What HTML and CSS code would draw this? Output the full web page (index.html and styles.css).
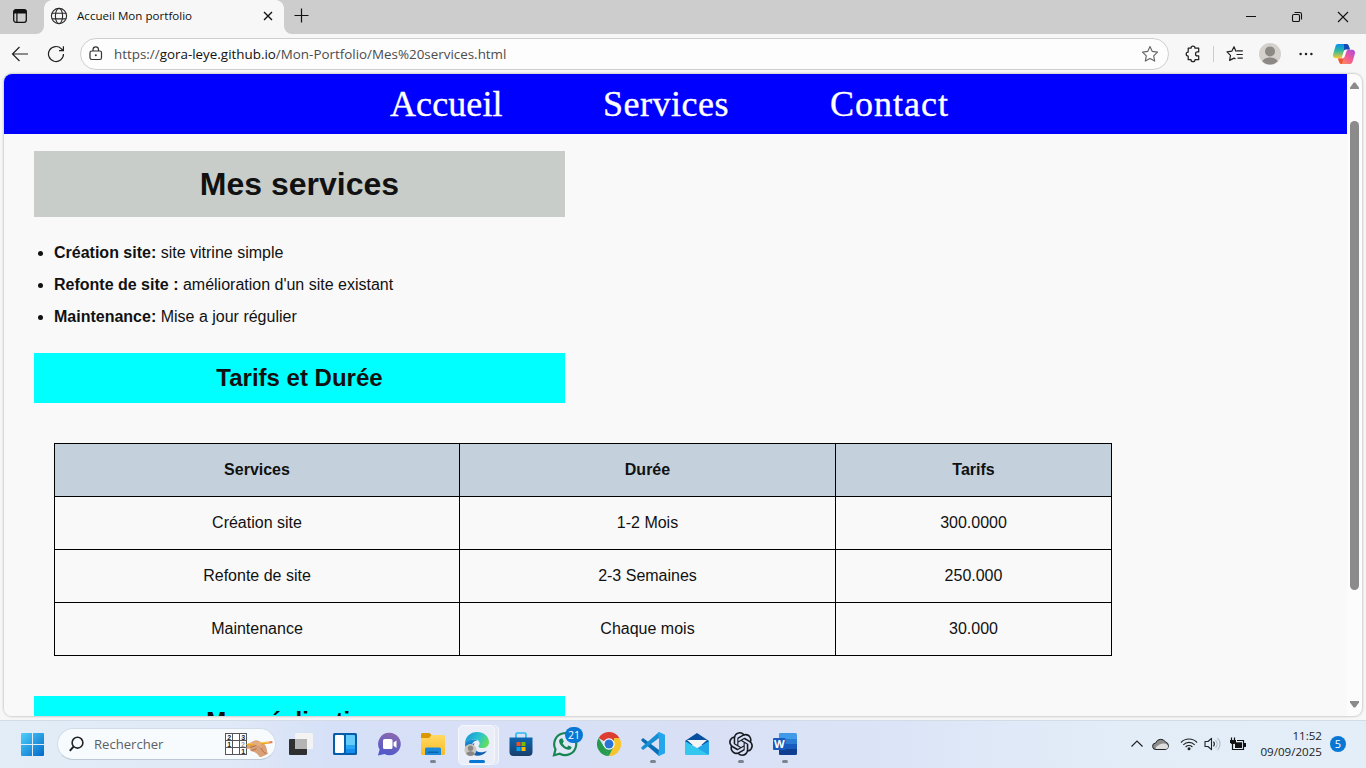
FILE: index.html
```html
<!DOCTYPE html>
<html lang="fr">
<head>
<meta charset="utf-8">
<title>Accueil Mon portfolio</title>
<link rel="stylesheet" href="styles.css">
</head>
<body>
<header class="tabstrip">
  <div class="strip-left">
    <svg width="16" height="16" viewBox="0 0 16 16"><rect x="1.7" y="1.7" width="12.6" height="12.6" rx="2.2" fill="none" stroke="#111" stroke-width="1.3"/><path d="M1.5 5.4V3.5a2 2 0 0 1 2-2h9a2 2 0 0 1 2 2v1.9z" fill="#111"/><path d="M4.9 5v9" stroke="#111" stroke-width="1.2"/></svg>
  </div>
  <div class="tab">
    <svg class="globe" width="18" height="18" viewBox="0 0 18 18" fill="none" stroke="#2b2b2b" stroke-width="1.15"><circle cx="9" cy="9" r="7.6"/><ellipse cx="9" cy="9" rx="3.6" ry="7.6"/><path d="M2 6.2h14M2 11.8h14"/></svg>
    <span class="tab-title">Accueil Mon portfolio</span>
    <svg class="tab-close" width="10" height="10" viewBox="0 0 10 10"><path d="M1 1l8 8M9 1l-8 8" stroke="#111" stroke-width="1.4"/></svg>
  </div>
  <div class="strip-right">
    <svg class="plus" width="15" height="15" viewBox="0 0 15 15"><path d="M7.5.5v14M.5 7.5h14" stroke="#111" stroke-width="1.2"/></svg>
    <div class="window-buttons">
      <svg width="12" height="12" viewBox="0 0 12 12"><path d="M1 5.500h10" stroke="#111"/></svg>
      <svg width="12" height="12" viewBox="0 0 12 12" fill="none" stroke="#111" stroke-width="1.1"><rect x="1.5" y="3.5" width="7" height="7" rx="1.3"/><path d="M3.5 1.5H8.7a1.8 1.8 0 0 1 1.8 1.8V8.5"/></svg>
      <svg width="12" height="12" viewBox="0 0 12 12"><path d="M1 1l10 10M11 1L1 11" stroke="#111" stroke-width="1.1"/></svg>
    </div>
  </div>
</header>
<div class="toolbar">
  <svg class="back" width="18" height="18" viewBox="0 0 18 18" fill="none" stroke="#222" stroke-width="1.2"><path d="M17 9H1.5M8.5 2L1.5 9l7 7"/></svg>
  <svg class="reload" width="18" height="18" viewBox="0 0 18 18" fill="none" stroke="#222" stroke-width="1.2"><path d="M16.5 9a7.5 7.5 0 1 1-2.1-5.2L16 5.5M16.4 1.2v4.5H12"/></svg>
  <div class="address">
    <svg width="14" height="16" viewBox="0 0 14 16" fill="none" stroke="#333" stroke-width="1.2"><rect x="1" y="5" width="11.5" height="8.5" rx="1.8"/><path d="M4 5V3.700a2.75 2.75 0 0 1 5.5 0V5"/><circle cx="6.8" cy="9.300" r="1" fill="#333" stroke="none"/></svg>
    <span class="url">https://<b>gora-leye.github.io</b>/Mon-Portfolio/Mes%20services.html</span>
    <svg class="star" width="18" height="18" viewBox="0 0 18 18" fill="none" stroke="#666" stroke-width="1.15" stroke-linejoin="round"><path d="M9 1.5l2.3 4.9 5.2.7-3.8 3.7 1 5.3L9 13.6l-4.7 2.5 1-5.3L1.5 7.1l5.2-.7z"/></svg>
  </div>
  <div class="tools">
    <svg class="puzzle" width="18" height="18" viewBox="0 0 18 18" fill="none" stroke="#222" stroke-width="1.25" stroke-linejoin="round"><path d="M4.2 3.2H7a2 2 0 0 1 4 0h3.7v3.7h-1.2a2 2 0 0 0 0 4h1.2v3.8H11a2 2 0 0 1-4 0H4.2V11a2 2 0 1 1 0-4z"/></svg>
    <span class="divider"></span>
    <svg class="favs" width="18" height="18" viewBox="0 0 18 18" fill="none" stroke="#222" stroke-width="1.2" stroke-linejoin="round"><path d="M10 6.5l-2-4.8-2.2 4.5-4.8.7 3.5 3.5-.9 5L8 13.1l1.5.8M10.5 5.8h6.3M10.5 9.5h6.3M11.5 13.2h5.3"/></svg>
    <svg class="avatar" width="22" height="22" viewBox="0 0 22 22"><circle cx="11" cy="11" r="11" fill="#d4d1cd"/><circle cx="11" cy="8.4" r="5" fill="#8c8883"/><path d="M3.4 18.4C5 13.3 17 13.3 18.6 18.4A11 11 0 0 1 3.4 18.4z" fill="#8c8883"/></svg>
    <svg class="more" width="16" height="4" viewBox="0 0 16 4" fill="#222"><circle cx="2.6" cy="2" r="1.25"/><circle cx="8" cy="2" r="1.25"/><circle cx="13.4" cy="2" r="1.25"/></svg>
    <svg class="copilot" width="24" height="22" viewBox="0 0 24 22"><defs><linearGradient id="ca" x1="0" y1="0" x2="0" y2="1"><stop offset="0" stop-color="#0a8df0"/><stop offset=".45" stop-color="#28b7a4"/><stop offset="1" stop-color="#f8cb2e"/></linearGradient><linearGradient id="cb" x1="1" y1="0" x2="0" y2="1"><stop offset="0" stop-color="#a748e8"/><stop offset=".5" stop-color="#f45c91"/><stop offset="1" stop-color="#ff9d4a"/></linearGradient></defs><path d="M6 1h8.2c2 0 2.4 1.3 3 3.3l.7 2.2H15c-2 0-2.7 1-3.3 3L10 15.2H4C1.5 15.2.5 13.3 1.2 11L3.400 3.400C3.900 1.800 4.600 1 6 1z" fill="url(#ca)"/><path d="M12 1h2.200c2 0 2.400 1.300 3 3.300l.700 2.200H15c-1.500 0-2.200.4-2.800 1.500z" fill="#1549b7"/><path d="M18 21H9.800c-2 0-2.500-1.300-3.100-3.300l-.6-2.200H9c2 0 2.700-1 3.300-3L14 6.800h6c2.500 0 3.500 1.900 2.800 4.200l-2.200 7.600c-.5 1.600-1.200 2.400-2.600 2.400z" fill="url(#cb)"/><path d="M6.100 15.500H9c1.300 0 2.100-.5 2.700-1.500L10 21c-2 0-2.700-1.300-3.300-3.300z" fill="#ee5737"/><path d="M13 6.700h3c-1 .3-1.500 1.300-1.900 2.600l-1.300 4c-.4 1.300-1.300 2.100-2.700 2.100H9.600l1.900-6.200c.3-1.200.7-2 1.500-2.500z" fill="#fbf9fc"/></svg>
  </div>
</div>
<div class="viewport-frame">
  <div class="page">
    <nav class="nav"><a class="n1">Accueil</a><a class="n2">Services</a><a class="n3">Contact</a></nav>
    <main class="content">
      <h1>Mes services</h1>
      <ul>
        <li><strong>Création site:</strong> site vitrine simple</li>
        <li><strong>Refonte de site :</strong> amélioration d'un site existant</li>
        <li><strong>Maintenance:</strong> Mise a jour régulier</li>
      </ul>
      <h2>Tarifs et Durée</h2>
      <table>
        <colgroup><col class="c1"><col class="c2"><col class="c3"></colgroup>
        <tr><th>Services</th><th>Durée</th><th>Tarifs</th></tr>
        <tr><td>Création site</td><td>1-2 Mois</td><td>300.0000</td></tr>
        <tr><td>Refonte de site</td><td>2-3 Semaines</td><td>250.000</td></tr>
        <tr><td>Maintenance</td><td>Chaque mois</td><td>30.000</td></tr>
      </table>
      <h2>Mes réalisations</h2>
    </main>
  </div>
  <div class="scrollbar">
    <svg width="9" height="8" viewBox="0 0 9 8"><path d="M3.700.5h1.600L9 5.500V7H0V5.500z" fill="#8b8b8b"/></svg>
    <div class="thumb"></div>
    <svg class="down" width="9" height="8" viewBox="0 0 9 8"><path d="M3.700 7.500h1.600L9 2.500V1H0v1.500z" fill="#8b8b8b"/></svg>
  </div>
</div>
<footer class="taskbar">
  <svg class="start" width="23" height="23" viewBox="0 0 23 23"><defs><linearGradient id="wa" x1="0" y1="0" x2="1" y2="1"><stop offset="0" stop-color="#4fd0fb"/><stop offset="1" stop-color="#0069c9"/></linearGradient></defs><path d="M0 1a1 1 0 0 1 1-1h10v11H0zM12 0h10a1 1 0 0 1 1 1v10H12zM0 12h11v11H1a1 1 0 0 1-1-1zM12 12h11v10a1 1 0 0 1-1 1H12z" fill="url(#wa)"/></svg>
  <div class="search">
    <svg width="16" height="16" viewBox="0 0 16 16" fill="none" stroke="#222" stroke-width="1.6"><circle cx="8.500" cy="6.700" r="5.400"/><path d="M4.500 10.600L.8 14.800" stroke-width="2"/></svg>
    <span>Rechercher</span>
    <svg class="sudoku" width="50" height="26" viewBox="0 0 50 26"><rect x="1.500" y="2.500" width="21" height="21" fill="#fff" stroke="#555"/><path d="M8.500 2.500v21M15.500 2.500v21M1.500 9.500h21M1.500 16.500h21" stroke="#555"/><g class="digits"><text x="3.200" y="8.500">2</text><text x="17.300" y="8.500">3</text><text x="3.200" y="15.500">1</text><text x="17.300" y="22.500">1</text><text class="faint" x="17" y="15.500">2</text></g><path d="M23 14.500c2-2 6-4.700 9-5.200 3 .2 6 2.200 8.500 4 2.700 2.400 2 7 3.500 9.700l-8 3.500c-2.200-4-5-5.500-7.700-6-2.500-.5-3-2-1.500-2.700h-3c-2 0-2-1.500-.8-2z" fill="#daa078"/><path d="M26 16.500l6-2 4 .5M27.500 19.500l5-1.700M37 17c1 2.500 2.500 4.500 5 5.500" stroke="#ae7048" fill="none"/><path d="M21.500 13.800l4-1.800 20.500-1.500.3 2-20.500 2.200z" fill="#eda825"/><path d="M25.500 12.600l20.400-1.700" stroke="#ffd979" stroke-width=".7"/><path d="M45.500 10.300l2.700-.2.300 2-2.800.3z" fill="#ed786b"/><path d="M27 12.500c3-2.500 6-2.500 9-.2l2 3.200c-2 .5-5-.5-6.500-1.600z" fill="#e3ac84"/></svg>
  </div>
  <div class="apps">
    <div class="app"><svg width="24" height="24" viewBox="0 0 24 24"><rect x="0" y="7" width="18" height="16" rx="1" fill="#303030"/><rect x="6" y="1" width="18" height="16" rx="1" fill="#f3f3f3"/><rect x="6" y="7" width="12" height="10" fill="#b4b4b4"/></svg></div>
    <div class="app"><svg width="24" height="24" viewBox="0 0 24 24"><rect x="0" y="1" width="24" height="22" rx="1.5" fill="#075da9"/><rect x="2" y="3" width="9" height="18" rx="1" fill="#fff"/><path d="M13 3h8a1 1 0 0 1 1 1v9h-9z" fill="#66cdfb"/><path d="M13 13h9v7a1 1 0 0 1-1 1h-8z" fill="#168ded"/><path d="M13 13h9v4h-9z" fill="#27a6f5"/></svg></div>
    <div class="app"><svg width="24" height="24" viewBox="0 0 24 24"><defs><linearGradient id="cha" x1=".7" y1="0" x2=".4" y2="1"><stop offset="0" stop-color="#8c68ae"/><stop offset="1" stop-color="#5059cb"/></linearGradient></defs><path d="M12.5.8a11.2 11.2 0 1 1-5 21.2L1 23.500l1.600-6A11.200 11.200 0 0 1 12.500.8z" fill="url(#cha)"/><rect x="6" y="7" width="9.500" height="10" rx="1.600" fill="#fff"/><path d="M16.500 10.500l3-2v7.500l-3-2.200z" fill="#fff"/></svg></div>
    <div class="app running"><svg width="24" height="24" viewBox="0 0 24 24"><path d="M0 2.500A1.500 1.500 0 0 1 1.500 1h7L11 3.500h11.500A1.500 1.500 0 0 1 24 5V12H0z" fill="#dc9600"/><defs><linearGradient id="fo" x1="0" y1="0" x2="0" y2="1"><stop stop-color="#ffd965"/><stop offset="1" stop-color="#fbbc23"/></linearGradient></defs><path d="M0 6h8l2.500-3h12A1.500 1.500 0 0 1 24 4.500v17a1.500 1.500 0 0 1-1.500 1.500h-21A1.500 1.500 0 0 1 0 21.500z" fill="url(#fo)"/><path d="M4 23v-6a1.500 1.500 0 0 1 1.500-1.500h13A1.500 1.500 0 0 1 20 17v6z" fill="#188ad9"/><path d="M7.500 19.500h9a1 1 0 0 1 1 1v.5h-11v-.5a1 1 0 0 1 1-1z" fill="#0865ae"/></svg></div>
    <div class="app active"><svg width="26" height="26" viewBox="0 0 26 26"><defs><linearGradient id="ea" x1="0" y1=".2" x2="1" y2=".6"><stop stop-color="#1696d6"/><stop offset=".55" stop-color="#2bc3cf"/><stop offset="1" stop-color="#65e059"/></linearGradient><linearGradient id="eb" x1="0" y1="0" x2="0" y2="1"><stop stop-color="#1593d5"/><stop offset="1" stop-color="#105aa9"/></linearGradient></defs><path d="M1 13C1 5.800 6.500 1 13 1c7 0 12 4.700 12 10 0 4-3 6-6.500 6-3.300 0-4.700-1.200-3.700-2.600 2.300-3-.3-6-4.300-6C5.500 8.400 2 10.500 1 13z" fill="url(#ea)"/><path d="M1 13c1-3 4.500-4.700 8.500-4.600 1.500 0 3 .4 4 1.100-4 .3-6 3-5.500 6.500.5 5 5 9 10 7.500A12 12 0 0 1 1 13z" fill="url(#eb)"/><path d="M10.500 12c-2.400 4.500 1 9 6 9.300 2.400.1 4.600-.5 6.500-1.500-2.400 4-8 6-12.500 4-5-3-4.500-10 0-11.800z" fill="#0e60ae"/><circle cx="6.500" cy="19" r="6" fill="#c9c6c2"/><circle cx="6.500" cy="17.200" r="2.700" fill="#8b8783"/><path d="M2.300 23c1-3.600 7.500-3.600 8.500 0-2.300 2.600-6.200 2.600-8.500 0z" fill="#8b8783"/></svg></div>
    <div class="app"><svg width="24" height="24" viewBox="0 0 24 24"><defs><linearGradient id="st" x1="0" y1="0" x2="0" y2="1"><stop stop-color="#0d67b3"/><stop offset="1" stop-color="#183e6c"/></linearGradient></defs><path d="M7 6V2.500A1.500 1.500 0 0 1 8.500 1h7A1.500 1.500 0 0 1 17 2.500V6" fill="none" stroke="#28b9ee" stroke-width="1.700"/><path d="M.5 5.500h23V20a4 4 0 0 1-4 4h-15a4 4 0 0 1-4-4z" fill="url(#st)"/><path d="M7.500 10h4v4h-4z" fill="#f25022"/><path d="M12.500 10h4v4h-4z" fill="#7fba00"/><path d="M7.500 15h4v4h-4z" fill="#00a4ef"/><path d="M12.500 15h4v4h-4z" fill="#ffb900"/></svg></div>
    <div class="app"><svg width="26" height="26" viewBox="0 0 26 26"><path d="M2 24.300l1.500-6a11 11 0 1 1 4.300 4.400z" fill="#f3f8f6" fill-opacity=".3" stroke="#178653" stroke-width="2.200"/><path d="M9 7.500l1.300-.2 1.500 3.200-1.200 1.700c1 2 2.400 3.200 4.300 4l1.700-1.600 3 1.500c.2 1-.9 2.700-2.800 2.700-4.300 0-9.700-4.800-9.700-8.700 0-1.200.7-2.200 1.900-2.600z" fill="#178653"/></svg><span class="badge">21</span></div>
    <div class="app"><svg width="24" height="24" viewBox="0 0 24 24"><path d="M12 12L1.600 6A12 12 0 0 1 22.400 6z" fill="#dc3f32"/><path d="M1.600 6L7.200 15 12 24A12 12 0 0 1 1.600 6z" fill="#269b50"/><path d="M12 24l5-9.200V6h5.400A12 12 0 0 1 12 24z" fill="#f6c42d"/><path d="M7.600 14.500l4.400 2.800 4.800-2.500L12 24 6 14z" fill="#269b50"/><path d="M16.800 14.700L12 24c3 0 6.700-1.600 8.800-4.500z" fill="#f6c42d"/><circle cx="12" cy="12" r="5.700" fill="#fff"/><circle cx="12" cy="12" r="4.500" fill="#2874d9"/></svg></div>
    <div class="app running"><svg width="24" height="24" viewBox="0 0 24 24"><path d="M0 8l2-2 16 12v6L1 9.200z" fill="#086eb5"/><path d="M0 16l2 2L18 6V0L1 14.800z" fill="#168ed3"/><path d="M18 0l6 2.700v18.600L18 24l-1-.5 1-5.500V6l-1-5.500z" fill="#25a6ec"/></svg></div>
    <div class="app"><svg width="24" height="24" viewBox="0 0 24 24"><path d="M0 9L12 1l12 8v4H0z" fill="#0750a0"/><path d="M2 8h20l-9 8h-2z" fill="#f2f4f6"/><path d="M24 9v12.500a1.500 1.500 0 0 1-1.500 1.500H1z" fill="#22a5e9"/><path d="M0 9l12 7 12 7H1.500A1.500 1.500 0 0 1 0 21.500z" fill="#33c6ef"/></svg></div>
    <div class="app running"><svg width="24" height="24" viewBox="0 0 24 24" fill="#171a20"><path d="M22.282 9.821a5.985 5.985 0 0 0-.516-4.910 6.046 6.046 0 0 0-6.510-2.900A6.065 6.065 0 0 0 4.981 4.182a5.985 5.985 0 0 0-3.998 2.900 6.046 6.046 0 0 0 .743 7.097 5.980 5.980 0 0 0 .510 4.911 6.051 6.051 0 0 0 6.515 2.900A5.985 5.985 0 0 0 13.260 24a6.056 6.056 0 0 0 5.772-4.206 5.990 5.990 0 0 0 3.998-2.900 6.056 6.056 0 0 0-.748-7.073zM13.260 22.430a4.476 4.476 0 0 1-2.877-1.041l.142-.08 4.778-2.758a.795.795 0 0 0 .393-.682v-6.737l2.020 1.169a.071.071 0 0 1 .038.052v5.583a4.504 4.504 0 0 1-4.494 4.494zM3.600 18.304a4.471 4.471 0 0 1-.535-3.014l.142.085 4.783 2.759a.771.771 0 0 0 .780 0l5.844-3.369v2.332a.080.080 0 0 1-.034.062L9.740 19.950a4.499 4.499 0 0 1-6.140-1.646zM2.340 7.896a4.485 4.485 0 0 1 2.366-1.973V11.600a.766.766 0 0 0 .388.677l5.815 3.354-2.020 1.169a.076.076 0 0 1-.072 0l-4.830-2.787A4.504 4.504 0 0 1 2.340 7.896zm16.597 3.855l-5.833-3.387L15.119 7.200a.076.076 0 0 1 .071 0l4.830 2.791a4.494 4.494 0 0 1-.676 8.105v-5.678a.790.790 0 0 0-.407-.667zm2.010-3.023l-.141-.085-4.774-2.782a.776.776 0 0 0-.785 0L9.409 9.230V6.897a.066.066 0 0 1 .028-.061l4.830-2.787a4.500 4.500 0 0 1 6.680 4.660zM8.307 12.863l-2.020-1.164a.080.080 0 0 1-.038-.057V6.075a4.499 4.499 0 0 1 7.376-3.454l-.142.081-4.778 2.758a.795.795 0 0 0-.393.681zm1.097-2.365l2.602-1.500 2.607 1.500v2.999l-2.597 1.500-2.607-1.500z"/></svg></div>
    <div class="app running"><svg width="24" height="24" viewBox="0 0 24 24"><path d="M7 1h15.500A1.500 1.500 0 0 1 24 2.500V7H6V2a1 1 0 0 1 1-1z" fill="#3f9be9"/><path d="M6 7h18v5H6z" fill="#2b7cd3"/><path d="M6 12h18v5H6z" fill="#185abd"/><path d="M6 17h18v4.500a1.500 1.500 0 0 1-1.500 1.500H7a1 1 0 0 1-1-1z" fill="#103f91"/><rect x="0" y="6" width="12.500" height="12" rx="1" fill="#185abd"/><text x="6.250" y="15.800" text-anchor="middle" class="word-letter">W</text></svg></div>
  </div>
  <div class="tray">
    <svg class="chev" width="14" height="10" viewBox="0 0 14 10"><path d="M1.500 7.500L7 2l5.500 5.500" fill="none" stroke="#222" stroke-width="1.200"/></svg>
    <svg class="cloud" width="18" height="14" viewBox="0 0 18 14"><path d="M4 12.500A3.200 3.200 0 0 1 3.700 6 5.400 5.400 0 0 1 13.500 5 3.900 3.900 0 0 1 13.700 12.500z" fill="#8d8d8d" stroke="#222"/><path d="M4 12C2.500 10 8 7 10 6.800c2.500-.8 6 .5 6.100 2.700 0 1.500-1 2.500-2.400 2.500z" fill="#dedede"/></svg>
    <svg class="wifi" width="18" height="14" viewBox="0 0 18 14" fill="none" stroke="#222" stroke-width="1.100"><path d="M1 5.500a11 11 0 0 1 16 0M3.300 7.800a8 8 0 0 1 11.400 0M5.600 10a5 5 0 0 1 6.800 0"/><circle cx="9" cy="11.800" r="1.500" fill="#222" stroke="none"/></svg>
    <svg class="sound" width="18" height="14" viewBox="0 0 18 14" fill="none" stroke="#222" stroke-width="1.100"><path d="M1 4.500h3L7.500 1.300v11.400L4 9.500H1z" stroke-linejoin="round"/><path d="M9.500 4.600a4 4 0 0 1 0 4.800"/><path d="M11.500 3a6 6 0 0 1 0 8M13.500 1.200a8 8 0 0 1 0 11.600" stroke="#aeb7c0"/></svg>
    <svg class="battery" width="17" height="14" viewBox="0 0 17 14"><path d="M1.500.5v3M4.500.5v3" stroke="#111" stroke-width="1.200"/><path d="M0 3h6v2.500L4.500 7H1.500L0 5.500z" fill="#111"/><path d="M2.500 6v6.500h11V3.500H7" fill="none" stroke="#111" stroke-width="1.200"/><rect x="5" y="5.300" width="7" height="5.700" fill="#111"/><path d="M14 6h2v4h-2z" fill="#111"/></svg>
    <div class="clock"><div class="time">11:52</div><div class="date">09/09/2025</div></div>
    <span class="notice">5</span>
  </div>
</footer>
</body>
</html>
```
FILE: styles.css
```css
* { box-sizing: border-box; }
body { margin: 0; width: 1366px; height: 768px; overflow: hidden; background: #f7f7f7; font-family: "Open Sans", "Noto Sans", sans-serif; color: #111; display: flex; flex-direction: column; }
svg { display: block; flex: none; }

.tabstrip { height: 34px; display: flex; flex: none; background: #f7f7f7; }
.strip-left { width: 44px; background: #cdcdcd; border-bottom-right-radius: 8px; padding: 8px 0 0 12px; }
.tab { width: 240px; background: #f7f7f7; display: flex; align-items: center; padding: 0 11px 2px 6px; position: relative; }
.tab::before, .tab::after { content: ""; position: absolute; top: 0; width: 8px; height: 8px; }
.tab::before { left: 0; background: radial-gradient(circle at 8px 8px, transparent 7.5px, #cdcdcd 8px); }
.tab::after { right: 0; background: radial-gradient(circle at 0 8px, transparent 7.5px, #cdcdcd 8px); }
.tab-title { font-size: 11.6px; margin: -2px 0 0 9px; flex: 1; white-space: nowrap; }
.strip-right { flex: 1; background: #cdcdcd; border-bottom-left-radius: 8px; display: flex; justify-content: space-between; padding: 8px 17px 0 10px; }
.window-buttons { display: flex; gap: 34px; padding-top: 3px; }

.toolbar { height: 40px; flex: none; display: flex; align-items: center; padding-left: 11px; }
.reload { margin-left: 18px; }
.address { width: 1089px; height: 32px; margin-left: 15px; border: 1px solid #cfcfcf; border-radius: 16px; background: #fdfdfd; display: flex; align-items: center; padding: 0 9px 0 8px; }
.url { flex: 1; margin-left: 11px; font-size: 13.4px; color: #4c4c4c; }
.url b { font-weight: 400; color: #111; }
.tools { display: flex; align-items: center; margin-left: 15px; }
.divider { width: 1px; height: 16px; background: #cdcdcd; margin-left: 11px; }
.favs { margin-left: 12px; }
.avatar { margin-left: 15px; }
.more { margin-left: 17px; }
.copilot { margin-left: 18px; }

.viewport-frame { margin: 0 4px; width: 1358px; height: 642px; flex: none; display: flex; border-radius: 8px; overflow: hidden; background: #fcfcfc; box-shadow: 0 0 2px 1px rgba(0,0,0,.17); }
.page { width: 1343px; height: 642px; overflow: hidden; background: #f9f9f9; font-family: "Liberation Sans", Arial, sans-serif; font-size: 16px; }
.nav { height: 60px; background: #00f; color: #fff; display: flex; align-items: center; padding-left: 386px; font-family: "Liberation Serif", Georgia, serif; font-size: 36px; -webkit-text-stroke: .35px #fff; }
.nav a { white-space: nowrap; }
.n1 { width: 213px; letter-spacing: .1px; }
.n2 { width: 227px; letter-spacing: .5px; }
.n3 { letter-spacing: 1px; }
.content { padding: 17px 30px 0; }
h1, h2 { width: 531px; margin: 0; text-align: center; }
h1 { height: 66px; line-height: 66px; font-size: 32px; background: #c9cdc9; }
h2 { height: 50px; line-height: 50px; font-size: 24px; background: #0ff; }
ul { margin: 20px 0; padding-left: 20px; line-height: 32px; }
table { width: 1058px; margin: 40px 0 40px 20px; border-collapse: collapse; table-layout: fixed; text-align: center; }
.c1 { width: 405px; }
.c2 { width: 376px; }
.c3 { width: 276px; }
th, td { border: 1px solid #000; height: 53px; padding: 0; }
th { background: #c4d1dd; }
.scrollbar { width: 15px; display: flex; flex-direction: column; align-items: center; padding-top: 8px; }
.thumb { width: 9px; height: 469px; margin-top: 31px; background: #8b8b8b; border-radius: 5px; }
.down { margin-top: 110px; }

.taskbar { height: 48px; margin-top: 4px; flex: none; display: flex; align-items: center; padding: 0 0 1px 21px; border-top: 1px solid #d3dbe6; background: linear-gradient(90deg, #e2edf7 0, #dfe9f7 230px, #d6e0f7 330px, #d9e0f6 700px, #dce5f7 900px, #e2edf8 1120px, #e3eef8 100%); }
.search { width: 219px; height: 32px; margin-left: 13px; border: 1px solid #d2dce8; border-bottom-color: #bcc8d5; border-radius: 16px; background: #f8fbfe; display: flex; align-items: center; padding-left: 11px; font-size: 13.1px; color: #5b6065; }
.search span { margin-left: 9px; width: 130px; }
.digits { font: bold 7px "Liberation Sans", sans-serif; fill: #222; }
.faint { fill: #999; }
.apps { display: flex; margin-left: 3px; }
.app { width: 44px; height: 46px; display: flex; align-items: center; justify-content: center; position: relative; }
.running::after { content: ""; position: absolute; bottom: 4px; left: 19px; width: 6px; height: 3px; border-radius: 2px; background: #7d8390; }
.active svg { position: relative; }
.active::before { content: ""; position: absolute; left: 3px; top: 4px; width: 35px; height: 38px; border: 1px solid #f5f7fb; border-radius: 5px; background: #e9eef9; box-shadow: 3px 0 0 #e2e8f6, 4px 0 0 #f5f7fb; }
.active::after { content: ""; position: absolute; bottom: 4px; left: 14px; width: 16px; height: 3px; border-radius: 2px; background: #0877d4; }
.badge { position: absolute; top: 6px; left: 22px; width: 18px; height: 16px; border-radius: 8px; background: #0877d4; color: #fff; font-size: 10.5px; line-height: 16px; text-align: center; }
.word-letter { font: bold 11px "Open Sans", sans-serif; fill: #fff; }
.tray { flex: 1; display: flex; align-items: center; justify-content: flex-end; padding-right: 20px; }
.cloud { margin-left: 8px; }
.wifi { margin-left: 10px; }
.sound { margin-left: 6px; }
.battery { margin-left: 8px; }
.clock { width: 74px; margin-left: 1px; text-align: right; font-size: 11.6px; line-height: 16px; color: #222; }
.notice { width: 16px; height: 16px; margin-left: 8px; border-radius: 50%; background: #0877d4; color: #fff; text-align: center; font-size: 11px; line-height: 16px; }
```
